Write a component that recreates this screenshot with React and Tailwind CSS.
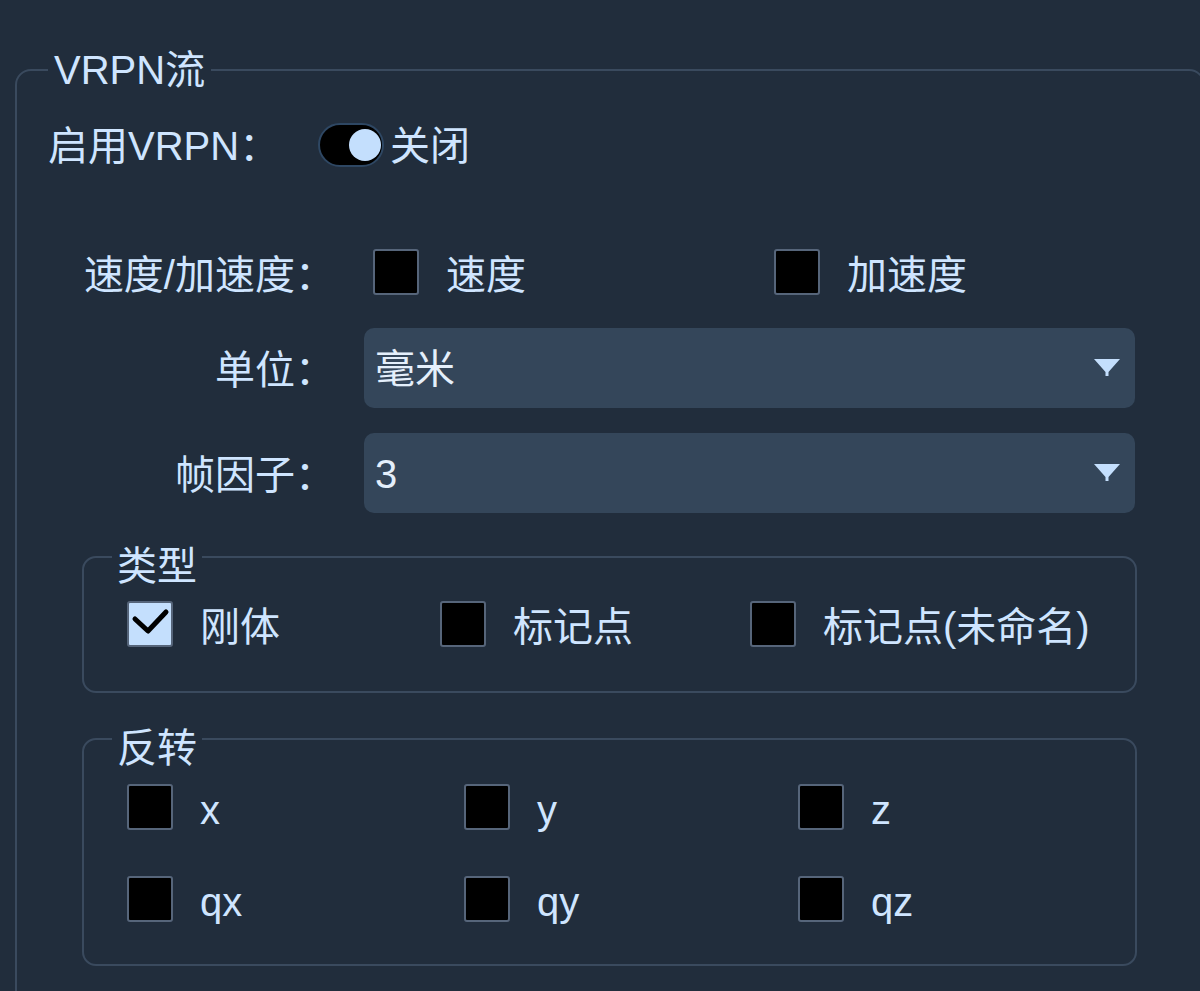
import React from 'react'

const FONT = "font-['Liberation_Sans','Noto_Sans_CJK_SC',sans-serif]"

function Box({ checked }) {
  if (checked) {
    return (
      <div className="w-[46px] h-[46px] shrink-0 rounded-[3px] border-2 border-[#56657a] bg-[#c4dffd]">
        <svg viewBox="0 0 42 42" className="w-full h-full">
          <path d="M6 16 L19 28 L37 9" fill="none" stroke="#000" strokeWidth="5" strokeLinejoin="round" strokeLinecap="round" />
        </svg>
      </div>
    )
  }
  return <div className="w-[46px] h-[46px] shrink-0 rounded-[3px] border-2 border-[#56657a] bg-black" />
}

function Check({ label, checked }) {
  return (
    <div className="flex items-center h-[46px]">
      <Box checked={checked} />
      <span className="ml-[27px] pt-[5px] leading-[46px] whitespace-nowrap">{label}</span>
    </div>
  )
}

function Combo({ value }) {
  return (
    <div className="h-[80px] w-[771px] rounded-[10px] bg-[#34465a] flex items-center justify-between pl-[11px] pr-[15px]">
      <span className="text-[#e4effb] leading-[48px] pt-[2px]">{value}</span>
      <svg width="26" height="18" viewBox="0 0 26 18">
        <path d="M0 0 H26 L14.5 13 V17 H11.5 V13 Z" fill="#c4dffd" />
      </svg>
    </div>
  )
}

function Group({ title, children, className }) {
  return (
    <fieldset className={`ml-[65px] w-[1055px] border-2 border-[#3a4a5e] rounded-[14px] ${className}`}>
      <legend className="ml-[28px] px-[5px] pt-[18px] leading-[36px]">{title}</legend>
      {children}
    </fieldset>
  )
}

export default function App() {
  return (
    <div className={`w-[1200px] h-[991px] overflow-hidden bg-[#212d3c] text-[40px] text-[#cfe5ff] ${FONT}`}>
      <fieldset className="ml-[15px] mt-[48px] w-[1190px] border-2 border-[#3a4a5e] rounded-[16px] pb-[80px]">
        <legend className="ml-[31px] px-[6px] leading-[44px]">VRPN流</legend>

        <div className="ml-[31px] mt-[31px] flex items-center h-[44px]">
          <span className="w-[270px] whitespace-nowrap pt-[2px]">启用VRPN：</span>
          <div className="w-[66px] h-[44px] rounded-full border-2 border-[#2e4763] bg-black flex items-center justify-end pr-[1px]">
            <div className="w-[32px] h-[32px] rounded-full bg-[#c4dffd]" />
          </div>
          <span className="ml-[6px] pt-[2px]">关闭</span>
        </div>

        <div className="mt-[80px] grid grid-cols-[318px_771px] gap-x-[29px] items-center">
          <span className="text-right whitespace-nowrap h-[50px] leading-[50px] pt-[3px]">速度/加速度：</span>
          <div className="flex items-center h-[50px] pl-[9px]">
            <div className="w-[401px]"><Check label="速度" /></div>
            <Check label="加速度" />
          </div>

          <span className="text-right mt-[31px] pt-[3px]">单位：</span>
          <div className="mt-[31px]"><Combo value="毫米" /></div>

          <span className="text-right mt-[25px] pt-[3px]">帧因子：</span>
          <div className="mt-[25px]"><Combo value="3" /></div>
        </div>

        <Group title="类型" className="mt-[17px]">
          <div className="mt-[17px] pb-[44px] pl-[43px] grid grid-cols-[313px_310px_1fr]">
            <Check label="刚体" checked />
            <Check label="标记点" />
            <Check label="标记点(未命名)" />
          </div>
        </Group>

        <Group title="反转" className="mt-[19px]">
          <div className="mt-[18px] pb-[42px] pl-[43px] grid grid-cols-[337px_334px_1fr] gap-y-[46px]">
            <Check label="x" />
            <Check label="y" />
            <Check label="z" />
            <Check label="qx" />
            <Check label="qy" />
            <Check label="qz" />
          </div>
        </Group>
      </fieldset>
    </div>
  )
}
